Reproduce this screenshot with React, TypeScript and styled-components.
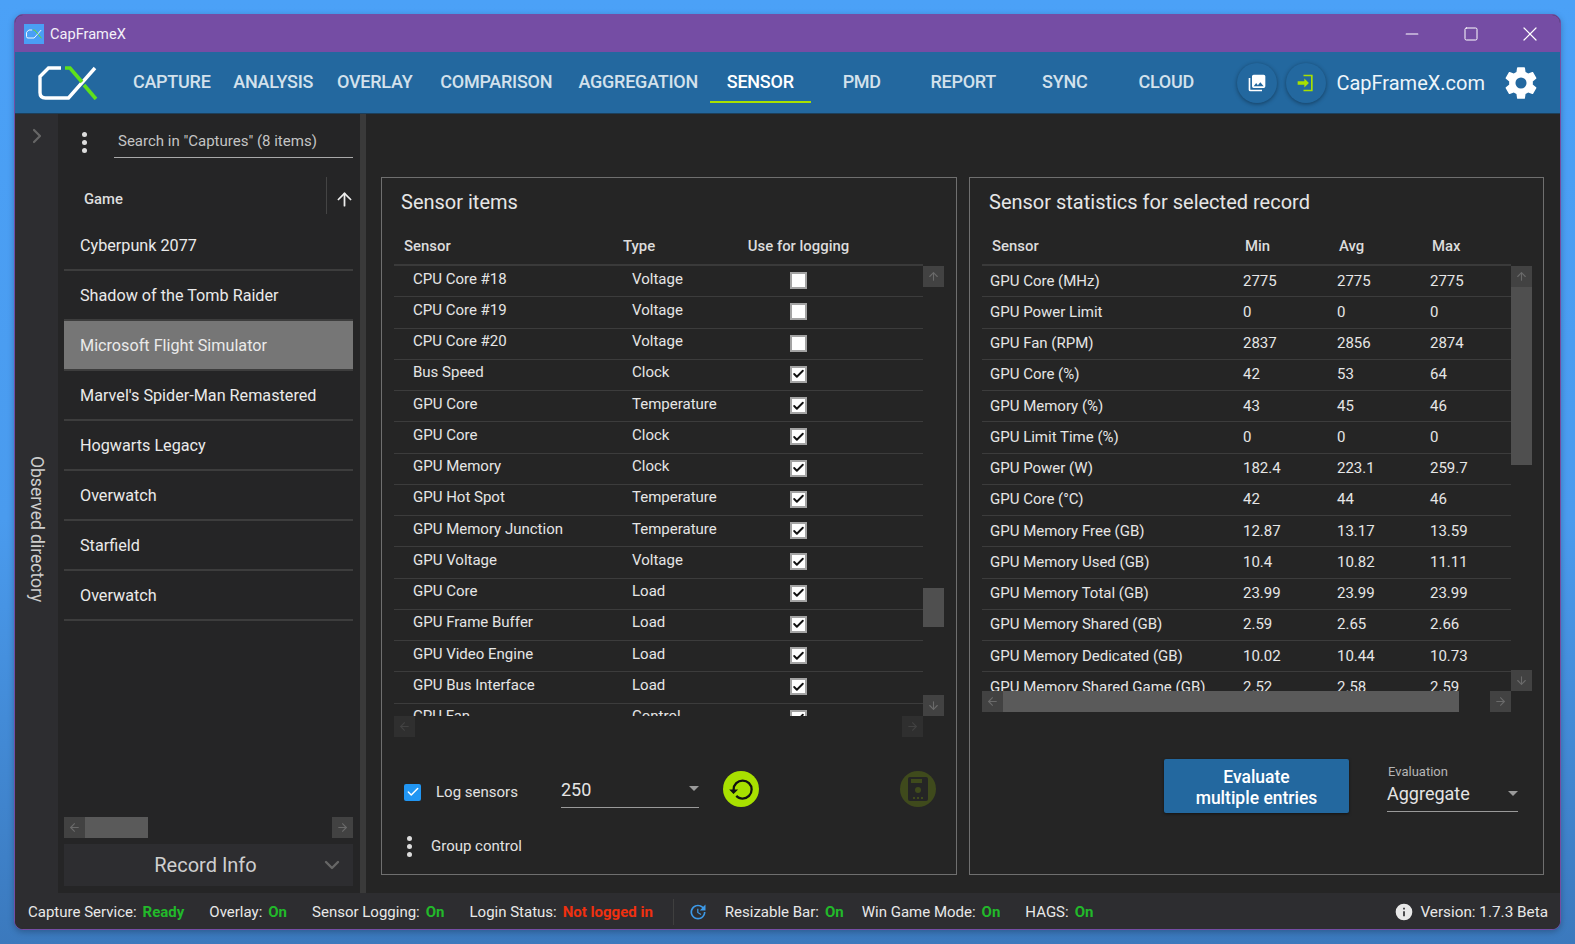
import styled, { createGlobalStyle } from 'styled-components';
import { ArrowUp, ArrowDown, ArrowLeft, ArrowRight, ChevronRight, ChevronDown, Minus, Square, X, Check } from 'lucide-react';

const GlobalStyle = createGlobalStyle`
  html, body { margin: 0; padding: 0; }
  body {
    width: 1575px;
    height: 944px;
    overflow: hidden;
    font-family: Roboto, "Liberation Sans", sans-serif;
    background: linear-gradient(180deg, #4ba1f7 0%, #4a9bee 55%, #3b79bd 100%);
  }
`;

const Page = styled.div`
  padding: 14px;
  box-sizing: border-box;
  height: 944px;
`;

const Window = styled.div`
  width: 1547px;
  height: 916px;
  box-sizing: border-box;
  display: flex;
  flex-direction: column;
  border: 1px solid #754da4;
  border-radius: 9px;
  overflow: hidden;
  background: #252525;
  box-shadow: 0 2px 6px rgba(0, 0, 0, 0.25);
`;

const TitleBar = styled.div`
  height: 37px;
  flex: none;
  display: flex;
  align-items: center;
  background: #754da4;
  padding-left: 9px;
  color: #f4f0f8;
  font-size: 14.6px;
`;

const TitleIcon = styled.div`
  width: 20px;
  height: 20px;
  background: #4a9ff5;
  display: flex;
  align-items: center;
  justify-content: center;
  margin-right: 6px;
`;

const TitleText = styled.span`
  flex: 1;
`;

const WinButton = styled.div`
  width: 59px;
  height: 37px;
  display: flex;
  align-items: center;
  justify-content: center;
  color: #fff;
`;

const WinButtons = styled.div`
  display: flex;
  padding-right: 1px;
`;

const Nav = styled.div`
  height: 62px;
  flex: none;
  display: flex;
  background: #23689f;
  border-bottom: 1px solid #1d3f5a;
  box-sizing: border-box;
  padding-left: 23px;
`;

const LogoBox = styled.div`
  width: 60px;
  margin-right: 23px;
  display: flex;
  align-items: center;
`;

const Tabs = styled.div`
  display: flex;
`;

const Tab = styled.div<{ $active?: boolean; $w: number }>`
  width: ${(p) => p.$w}px;
  height: 51px;
  box-sizing: border-box;
  padding-top: 10px;
  display: flex;
  align-items: center;
  justify-content: center;
  font-size: 18px;
  font-weight: 500;
  letter-spacing: -0.25px;
  color: ${(p) => (p.$active ? '#ffffff' : '#d3e1ec')};
  border-bottom: 2px solid ${(p) => (p.$active ? '#a8e000' : 'transparent')};
`;

const NavRight = styled.div`
  margin-left: auto;
  display: flex;
  align-items: center;
  padding-right: 20px;
`;

const RoundButton = styled.div`
  width: 40px;
  height: 40px;
  border-radius: 50%;
  background: #23689f;
  box-shadow: 0 1px 4px rgba(0, 0, 0, 0.4);
  display: flex;
  align-items: center;
  justify-content: center;
  margin-right: 9px;
`;

const SiteLink = styled.span`
  font-size: 20px;
  color: #eef5fa;
  margin-left: 1px;
  margin-right: 17px;
`;

const Main = styled.div`
  flex: 1;
  min-height: 0;
  display: flex;
`;

const Rail = styled.div`
  width: 43px;
  flex: none;
  background: #2d2d30;
  display: flex;
  flex-direction: column;
  align-items: center;
  color: #666;
  padding-top: 10px;
  box-sizing: border-box;
`;

const RailLabel = styled.div`
  writing-mode: vertical-rl;
  font-size: 17.5px;
  color: #cccccc;
  margin-top: 308px;
`;

const Side = styled.div`
  width: 302px;
  flex: none;
  box-sizing: border-box;
  padding: 0 7px 7px 6px;
  background: #252526;
  display: flex;
  flex-direction: column;
`;

const SearchRow = styled.div`
  height: 44px;
  flex: none;
  display: flex;
  padding-left: 18px;
`;

const DotsBox = styled.div<{ $drop?: number }>`
  width: 5px;
  display: flex;
  flex-direction: column;
  justify-content: center;
  gap: 3px;
  padding-top: ${(p) => p.$drop ?? 0}px;
`;

const Dot = styled.i`
  display: block;
  width: 5px;
  height: 5px;
  border-radius: 50%;
  background: #ddd;
`;

const SearchField = styled.div`
  margin-left: 27px;
  flex: 1;
  border-bottom: 1px solid #a9a9a9;
  display: flex;
  align-items: center;
  padding: 10px 0 0 4px;
  font-size: 15px;
  color: #c4c4c4;
`;

const SortHead = styled.div`
  height: 37px;
  margin-top: 19px;
  flex: none;
  display: flex;
  align-items: center;
  padding-left: 20px;
  font-size: 14.8px;
  font-weight: 500;
  color: #dedede;
`;

const SortName = styled.div`
  flex: 1;
  padding-top: 7px;
`;

const SortArrow = styled.div`
  width: 27px;
  height: 37px;
  box-sizing: border-box;
  border-left: 1px solid #444;
  padding: 7px 0 0 7px;
  display: flex;
  align-items: center;
  color: #eee;

  svg {
    flex: none;
  }
`;

const GameList = styled.div`
  margin-top: 7px;
  flex: 1;
`;

const GameRow = styled.div<{ $selected?: boolean }>`
  height: 50px;
  box-sizing: border-box;
  display: flex;
  align-items: center;
  padding: 0 0 0 16px;
  font-size: 16.2px;
  color: #eaeaea;
  background: ${(p) => (p.$selected ? '#767676' : 'transparent')};
  border-bottom: 2px solid #3d3d3d;
`;

const HBar = styled.div`
  height: 21px;
  flex: none;
  display: flex;
`;

const ScrollBtn = styled.div<{ $dim?: boolean }>`
  width: 21px;
  height: 21px;
  flex: none;
  display: flex;
  align-items: center;
  justify-content: center;
  background: ${(p) => (p.$dim ? '#2f2f2f' : '#424242')};
  color: ${(p) => (p.$dim ? '#424242' : '#6a6a6a')};
`;

const HThumb = styled.div<{ $w: number }>`
  width: ${(p) => p.$w}px;
  background: #5a5a5a;
`;

const Filler = styled.div`
  flex: 1;
`;

const RecordInfo = styled.div`
  height: 42px;
  margin-top: 6px;
  flex: none;
  background: #2d2d30;
  display: flex;
  align-items: center;
  justify-content: center;
  font-size: 20px;
  color: #cfcfcf;
  position: relative;
  padding-right: 6px;
`;

const RecordChevron = styled.div`
  position: absolute;
  right: 9px;
  top: 9px;
  color: #666;
`;

const Splitter = styled.div`
  width: 6px;
  flex: none;
  background: #3a3a3a;
`;

const Content = styled.div`
  flex: 1;
  min-width: 0;
  display: flex;
  gap: 12px;
  padding: 63px 16px 18px 15px;
`;

const Panel = styled.div<{ $w: number }>`
  width: ${(p) => p.$w}px;
  box-sizing: border-box;
  flex: none;
  border: 1px solid #6f6f6f;
  padding-left: 12px;
  display: flex;
  flex-direction: column;
`;

const PanelTitle = styled.div`
  height: 24px;
  line-height: 24px;
  margin: 12px 0 0 7px;
  font-size: 20px;
  color: #e6e6e6;
`;

const TableGrid = styled.div<{ $h: number; $w: number }>`
  margin-top: 18px;
  display: grid;
  grid-template-columns: ${(p) => p.$w}px 21px;
  grid-template-rows: 34px ${(p) => p.$h}px 21px;
`;

const HeadRow = styled.div<{ $cols: string }>`
  grid-column: 1;
  display: grid;
  grid-template-columns: ${(p) => p.$cols};
  box-sizing: border-box;
  border-bottom: 2px solid #3a3a3a;
  padding-top: 5px;
  font-size: 14.9px;
  font-weight: 500;
  color: #dcdcdc;
`;

const HeadCell = styled.div<{ $center?: boolean }>`
  padding-left: ${(p) => (p.$center ? 0 : 10)}px;
  text-align: ${(p) => (p.$center ? 'center' : 'left')};
  line-height: 19px;
`;

const Rows = styled.div`
  grid-column: 1;
  overflow: hidden;
`;

const DataRow = styled.div<{ $cols: string }>`
  height: 31.25px;
  box-sizing: border-box;
  display: grid;
  grid-template-columns: ${(p) => p.$cols};
  align-items: center;
  border-bottom: 1px solid #3c3c3c;
  font-size: 15px;
  color: #e6e6e6;
`;

const SensorCell = styled.div`
  padding: 0 0 5px 19px;
`;

const StatCell = styled.div`
  padding: 0 0 1px 8px;
`;

const BoxCell = styled.div`
  display: flex;
  justify-content: center;
  padding-bottom: 1px;
`;

const CheckBox = styled.div`
  width: 17px;
  height: 17px;
  box-sizing: border-box;
  background: #fff;
  border: 2px solid #a3a3a3;
  display: flex;
  align-items: center;
  justify-content: center;
  color: #111;
`;

const VBar = styled.div`
  grid-column: 2;
  display: flex;
  flex-direction: column;
`;

const VThumb = styled.div<{ $top: number; $h: number }>`
  margin-top: ${(p) => p.$top}px;
  height: ${(p) => p.$h}px;
  background: #4f4f4f;
`;

const HBarCell = styled(HBar)`
  grid-column: 1;
`;

const LogRow = styled.div`
  height: 36px;
  margin-top: 34px;
  padding: 0 20px 0 10px;
  display: flex;
  align-items: center;
`;

const BlueCheck = styled.div`
  width: 17px;
  height: 17px;
  margin-top: 6px;
  border-radius: 2px;
  background: #2196f3;
  display: flex;
  align-items: center;
  justify-content: center;
  color: #fff;
`;

const LogLabel = styled.span`
  margin: 6px 0 0 15px;
  width: 125px;
  font-size: 15px;
  color: #e2e2e2;
`;

const Combo = styled.div<{ $w: number }>`
  width: ${(p) => p.$w}px;
  box-sizing: border-box;
  border-bottom: 1px solid #9a9a9a;
  display: flex;
  align-items: center;
  justify-content: space-between;
  font-size: 18px;
  color: #e4e4e4;
`;

const LogCombo = styled(Combo)`
  height: 37px;
  align-self: flex-start;
  padding-top: 1px;
`;

const Caret = styled.i`
  width: 0;
  height: 0;
  border-left: 5.5px solid transparent;
  border-right: 5.5px solid transparent;
  border-top: 5.5px solid #9a9a9a;
`;

const LogCaret = styled(Caret)`
  margin-bottom: 3px;
`;

const GoButton = styled.div<{ $bg: string }>`
  width: 36px;
  height: 36px;
  border-radius: 50%;
  background: ${(p) => p.$bg};
  display: flex;
  align-items: center;
  justify-content: center;
`;

const RefreshButton = styled(GoButton)`
  margin-left: 24px;
`;

const SaveButton = styled(GoButton)`
  margin-left: auto;
`;

const GroupRow = styled.div`
  height: 24px;
  margin-top: 27px;
  padding-left: 13px;
  display: flex;
  align-items: center;
  font-size: 15px;
  color: #e2e2e2;
`;

const GroupText = styled.span`
  margin-left: 19px;
`;

const EvalRow = styled.div`
  margin-top: 47px;
  padding-right: 25px;
  display: flex;
  justify-content: flex-end;
`;

const EvalButton = styled.div`
  width: 185px;
  height: 54px;
  box-sizing: border-box;
  padding-top: 3px;
  border-radius: 2px;
  background: #23689f;
  box-shadow: 0 1px 3px rgba(0, 0, 0, 0.5);
  display: flex;
  align-items: center;
  justify-content: center;
  text-align: center;
  font-size: 17.5px;
  line-height: 21px;
  font-weight: 500;
  color: #fff;
`;

const EvalField = styled.div`
  margin-left: 38px;
  padding-top: 5px;
`;

const EvalLabel = styled.div`
  font-size: 13px;
  line-height: 15px;
  color: #b5b5b5;
  padding-left: 1px;
`;

const EvalCombo = styled(Combo)`
  height: 33px;
  padding-bottom: 3px;
`;

const StatusBar = styled.div`
  height: 36px;
  flex: none;
  box-sizing: border-box;
  background: #2d2d30;
  display: flex;
  align-items: center;
  padding: 1px 12px 0 13px;
  font-size: 15px;
  color: #e8e8e8;
`;

const StatusItem = styled.div<{ $after?: number }>`
  display: flex;
  gap: 6px;
  margin-right: ${(p) => p.$after ?? 25}px;
`;

const StatusValue = styled.span<{ $red?: boolean }>`
  font-weight: 700;
  color: ${(p) => (p.$red ? '#f0300f' : '#22b92a')};
`;

const StatusDivider = styled.div`
  width: 1px;
  height: 26px;
  background: #3f3f3f;
  margin: 0 14px 0 -5px;
`;

const StatusIcon = styled.div`
  display: flex;
  margin-right: 17px;
`;

const Version = styled.div`
  margin-left: auto;
  display: flex;
  align-items: center;
  gap: 6px;
  font-size: 15.3px;
`;

const TABS: [string, number][] = [
  ['CAPTURE', 101.5],
  ['ANALYSIS', 101.5],
  ['OVERLAY', 101.5],
  ['COMPARISON', 141.5],
  ['AGGREGATION', 142.5],
  ['SENSOR', 101.5],
  ['PMD', 101.5],
  ['REPORT', 101.5],
  ['SYNC', 101.5],
  ['CLOUD', 101.5],
];

const GAMES = [
  'Cyberpunk 2077',
  'Shadow of the Tomb Raider',
  'Microsoft Flight Simulator',
  "Marvel's Spider-Man Remastered",
  'Hogwarts Legacy',
  'Overwatch',
  'Starfield',
  'Overwatch',
];

const SENSORS: [string, string, boolean][] = [
  ['CPU Core #18', 'Voltage', false],
  ['CPU Core #19', 'Voltage', false],
  ['CPU Core #20', 'Voltage', false],
  ['Bus Speed', 'Clock', true],
  ['GPU Core', 'Temperature', true],
  ['GPU Core', 'Clock', true],
  ['GPU Memory', 'Clock', true],
  ['GPU Hot Spot', 'Temperature', true],
  ['GPU Memory Junction', 'Temperature', true],
  ['GPU Voltage', 'Voltage', true],
  ['GPU Core', 'Load', true],
  ['GPU Frame Buffer', 'Load', true],
  ['GPU Video Engine', 'Load', true],
  ['GPU Bus Interface', 'Load', true],
  ['CPU Fan', 'Control', true],
];

const STATS: string[][] = [
  ['GPU Core (MHz)', '2775', '2775', '2775'],
  ['GPU Power Limit', '0', '0', '0'],
  ['GPU Fan (RPM)', '2837', '2856', '2874'],
  ['GPU Core (%)', '42', '53', '64'],
  ['GPU Memory (%)', '43', '45', '46'],
  ['GPU Limit Time (%)', '0', '0', '0'],
  ['GPU Power (W)', '182.4', '223.1', '259.7'],
  ['GPU Core (°C)', '42', '44', '46'],
  ['GPU Memory Free (GB)', '12.87', '13.17', '13.59'],
  ['GPU Memory Used (GB)', '10.4', '10.82', '11.11'],
  ['GPU Memory Total (GB)', '23.99', '23.99', '23.99'],
  ['GPU Memory Shared (GB)', '2.59', '2.65', '2.66'],
  ['GPU Memory Dedicated (GB)', '10.02', '10.44', '10.73'],
  ['GPU Memory Shared Game (GB)', '2.52', '2.58', '2.59'],
];

const SENSOR_COLS = '219px 125px 121px';
const STAT_COLS = '253px 94px 93px 89px';

function Logo({ w, h }: { w: number; h: number }) {
  return (
    <svg width={w} height={h} viewBox="0 0 60 34" fill="none">
      <path d="M23 2H10.5L2 10.5V26.5Q2 32 7.5 32H30.5L57 2" stroke="#fff" strokeWidth="3.4" />
      <path d="M27 2H32L44 16" stroke="#5fe01c" strokeWidth="3.6" />
      <path d="M46 19L58 33" stroke="#5fe01c" strokeWidth="3.6" />
    </svg>
  );
}

function Dots({ drop }: { drop?: number }) {
  return (
    <DotsBox $drop={drop}>
      <Dot />
      <Dot />
      <Dot />
    </DotsBox>
  );
}

export default function App() {
  return (
    <Page>
      <GlobalStyle />
      <Window>
        <TitleBar>
          <TitleIcon>
            <Logo w={16} h={10} />
          </TitleIcon>
          <TitleText>CapFrameX</TitleText>
          <WinButtons>
            <WinButton>
              <Minus size={20} strokeWidth={1.3} />
            </WinButton>
            <WinButton>
              <Square size={16} strokeWidth={1.5} />
            </WinButton>
            <WinButton>
              <X size={24} strokeWidth={1.2} />
            </WinButton>
          </WinButtons>
        </TitleBar>

        <Nav>
          <LogoBox>
            <Logo w={60} h={34} />
          </LogoBox>
          <Tabs>
            {TABS.map(([t, w]) => (
              <Tab key={t} $w={w} $active={t === 'SENSOR'}>
                {t}
              </Tab>
            ))}
          </Tabs>
          <NavRight>
            <RoundButton>
              <svg width="20" height="20" viewBox="0 0 24 24" fill="#fff">
                <path d="M22,16V4A2,2 0 0,0 20,2H8A2,2 0 0,0 6,4V16A2,2 0 0,0 8,18H20A2,2 0 0,0 22,16M11,12L13.03,14.71L16,11L20,16H8M2,6V20A2,2 0 0,0 4,22H18V20H4V6" />
              </svg>
            </RoundButton>
            <RoundButton>
              <svg width="20" height="20" viewBox="0 0 24 24" fill="#a8e000">
                <path d="M10 6.5V10H2V14H10V17.5L15.5 12ZM9 2H20V22H9V20H18V4H9Z" />
              </svg>
            </RoundButton>
            <SiteLink>CapFrameX.com</SiteLink>
            <svg width="38" height="38" viewBox="0 0 24 24" fill="#fff">
              <path d="M12,15.5A3.5,3.5 0 0,1 8.5,12A3.5,3.5 0 0,1 12,8.5A3.5,3.5 0 0,1 15.5,12A3.5,3.5 0 0,1 12,15.5M19.43,12.97C19.47,12.65 19.5,12.33 19.5,12C19.5,11.67 19.47,11.34 19.43,11L21.54,9.37C21.73,9.22 21.78,8.95 21.66,8.73L19.66,5.27C19.54,5.05 19.27,4.96 19.05,5.05L16.56,6.05C16.04,5.66 15.5,5.32 14.87,5.07L14.5,2.42C14.46,2.18 14.25,2 14,2H10C9.75,2 9.54,2.18 9.5,2.42L9.13,5.07C8.5,5.32 7.96,5.66 7.44,6.05L4.95,5.05C4.73,4.96 4.46,5.05 4.34,5.27L2.34,8.73C2.21,8.95 2.27,9.22 2.46,9.37L4.57,11C4.53,11.34 4.5,11.67 4.5,12C4.5,12.33 4.53,12.65 4.57,12.97L2.46,14.63C2.27,14.78 2.21,15.05 2.34,15.27L4.34,18.73C4.46,18.95 4.73,19.03 4.95,18.95L7.44,17.94C7.96,18.34 8.5,18.68 9.13,18.93L9.5,21.58C9.54,21.82 9.75,22 10,22H14C14.25,22 14.46,21.82 14.5,21.58L14.87,18.93C15.5,18.67 16.04,18.34 16.56,17.94L19.05,18.95C19.27,19.03 19.54,18.95 19.66,18.73L21.66,15.27C21.78,15.05 21.73,14.78 21.54,14.63L19.43,12.97Z" />
            </svg>
          </NavRight>
        </Nav>

        <Main>
          <Rail>
            <ChevronRight size={24} strokeWidth={2.2} />
            <RailLabel>Observed directory</RailLabel>
          </Rail>

          <Side>
            <SearchRow>
              <Dots drop={12} />
              <SearchField>Search in "Captures" (8 items)</SearchField>
            </SearchRow>
            <SortHead>
              <SortName>Game</SortName>
              <SortArrow>
                <ArrowUp size={21} strokeWidth={2} />
              </SortArrow>
            </SortHead>
            <GameList>
              {GAMES.map((g, i) => (
                <GameRow key={i} $selected={i === 2}>
                  {g}
                </GameRow>
              ))}
            </GameList>
            <HBar>
              <ScrollBtn>
                <ArrowLeft size={13} />
              </ScrollBtn>
              <HThumb $w={63} />
              <Filler />
              <ScrollBtn>
                <ArrowRight size={13} />
              </ScrollBtn>
            </HBar>
            <RecordInfo>
              Record Info
              <RecordChevron>
                <ChevronDown size={24} strokeWidth={2.4} />
              </RecordChevron>
            </RecordInfo>
          </Side>

          <Splitter />

          <Content>
            <Panel $w={576}>
              <PanelTitle>Sensor items</PanelTitle>
              <TableGrid $h={450} $w={529}>
                <HeadRow $cols={SENSOR_COLS}>
                  <HeadCell>Sensor</HeadCell>
                  <HeadCell>Type</HeadCell>
                  <HeadCell $center>Use for logging</HeadCell>
                </HeadRow>
                <Filler />
                <Rows>
                  {SENSORS.map(([name, type, on], i) => (
                    <DataRow key={i} $cols={SENSOR_COLS}>
                      <SensorCell>{name}</SensorCell>
                      <SensorCell>{type}</SensorCell>
                      <BoxCell>
                        <CheckBox>{on && <Check size={14} strokeWidth={3.5} />}</CheckBox>
                      </BoxCell>
                    </DataRow>
                  ))}
                </Rows>
                <VBar>
                  <ScrollBtn>
                    <ArrowUp size={13} />
                  </ScrollBtn>
                  <VThumb $top={301} $h={39} />
                  <Filler />
                  <ScrollBtn>
                    <ArrowDown size={13} />
                  </ScrollBtn>
                </VBar>
                <HBarCell>
                  <ScrollBtn $dim>
                    <ArrowLeft size={13} />
                  </ScrollBtn>
                  <Filler />
                  <ScrollBtn $dim>
                    <ArrowRight size={13} />
                  </ScrollBtn>
                </HBarCell>
              </TableGrid>
              <LogRow>
                <BlueCheck>
                  <Check size={14} strokeWidth={2.6} />
                </BlueCheck>
                <LogLabel>Log sensors</LogLabel>
                <LogCombo $w={138}>
                  250
                  <LogCaret />
                </LogCombo>
                <RefreshButton $bg="#a8e000">
                  <svg width="27" height="27" viewBox="0 0 24 24" fill="#111">
                    <path d="M13,3A9,9 0 0,0 4,12H1L4.89,15.89L4.96,16.03L9,12H6A7,7 0 0,1 13,5A7,7 0 0,1 20,12A7,7 0 0,1 13,19C11.07,19 9.32,18.21 8.06,16.94L6.64,18.36C8.27,20 10.5,21 13,21A9,9 0 0,0 22,12A9,9 0 0,0 13,3Z" />
                  </svg>
                </RefreshButton>
                <SaveButton $bg="#3f4a1c">
                  <svg width="24" height="26" viewBox="0 0 24 26">
                    <rect x="2" y="1" width="20" height="24" rx="2" fill="#252525" />
                    <rect x="5" y="3" width="11" height="4" fill="#3f4a1c" />
                    <circle cx="12" cy="14" r="3" fill="#3f4a1c" />
                    <rect x="7" y="21" width="2" height="2" fill="#3f4a1c" />
                    <rect x="11" y="21" width="2" height="2" fill="#3f4a1c" />
                    <rect x="15" y="21" width="2" height="2" fill="#3f4a1c" />
                  </svg>
                </SaveButton>
              </LogRow>
              <GroupRow>
                <Dots />
                <GroupText>Group control</GroupText>
              </GroupRow>
            </Panel>

            <Panel $w={575}>
              <PanelTitle>Sensor statistics for selected record</PanelTitle>
              <TableGrid $h={425} $w={529}>
                <HeadRow $cols={STAT_COLS}>
                  <HeadCell>Sensor</HeadCell>
                  <HeadCell>Min</HeadCell>
                  <HeadCell>Avg</HeadCell>
                  <HeadCell>Max</HeadCell>
                </HeadRow>
                <Filler />
                <Rows>
                  {STATS.map((row) => (
                    <DataRow key={row[0]} $cols={STAT_COLS}>
                      {row.map((v, i) => (
                        <StatCell key={i}>{v}</StatCell>
                      ))}
                    </DataRow>
                  ))}
                </Rows>
                <VBar>
                  <ScrollBtn>
                    <ArrowUp size={13} />
                  </ScrollBtn>
                  <VThumb $top={0} $h={178} />
                  <Filler />
                  <ScrollBtn>
                    <ArrowDown size={13} />
                  </ScrollBtn>
                </VBar>
                <HBarCell>
                  <ScrollBtn>
                    <ArrowLeft size={13} />
                  </ScrollBtn>
                  <HThumb $w={456} />
                  <Filler />
                  <ScrollBtn>
                    <ArrowRight size={13} />
                  </ScrollBtn>
                </HBarCell>
              </TableGrid>
              <EvalRow>
                <EvalButton>
                  Evaluate
                  <br />
                  multiple entries
                </EvalButton>
                <EvalField>
                  <EvalLabel>Evaluation</EvalLabel>
                  <EvalCombo $w={131}>
                    Aggregate
                    <Caret />
                  </EvalCombo>
                </EvalField>
              </EvalRow>
            </Panel>
          </Content>
        </Main>

        <StatusBar>
          <StatusItem>
            Capture Service: <StatusValue>Ready</StatusValue>
          </StatusItem>
          <StatusItem>
            Overlay: <StatusValue>On</StatusValue>
          </StatusItem>
          <StatusItem>
            Sensor Logging: <StatusValue>On</StatusValue>
          </StatusItem>
          <StatusItem>
            Login Status: <StatusValue $red>Not logged in</StatusValue>
          </StatusItem>
          <StatusDivider />
          <StatusIcon>
            <svg width="20" height="20" viewBox="0 0 24 24" fill="#3d9ae8">
              <path d="M21,10.12H14.22L16.96,7.3C14.23,4.6 9.81,4.5 7.08,7.2C4.35,9.91 4.35,14.28 7.08,17C9.81,19.7 14.23,19.7 16.96,17C18.32,15.65 19,14.08 19,12.1H21C21,14.08 20.12,16.65 18.36,18.39C14.85,21.87 9.15,21.87 5.64,18.39C2.14,14.92 2.11,9.28 5.62,5.81C9.13,2.34 14.76,2.34 18.27,5.81L21,3V10.12M12.5,8V12.25L16,14.33L15.28,15.54L11,13V8H12.5Z" />
            </svg>
          </StatusIcon>
          <StatusItem $after={18}>
            Resizable Bar: <StatusValue>On</StatusValue>
          </StatusItem>
          <StatusItem>
            Win Game Mode: <StatusValue>On</StatusValue>
          </StatusItem>
          <StatusItem>
            HAGS: <StatusValue>On</StatusValue>
          </StatusItem>
          <Version>
            <svg width="20" height="20" viewBox="0 0 24 24" fill="#e8e8e8">
              <path d="M13,9H11V7H13M13,17H11V11H13M12,2A10,10 0 0,0 2,12A10,10 0 0,0 12,22A10,10 0 0,0 22,12A10,10 0 0,0 12,2Z" />
            </svg>
            Version: 1.7.3 Beta
          </Version>
        </StatusBar>
      </Window>
    </Page>
  );
}
